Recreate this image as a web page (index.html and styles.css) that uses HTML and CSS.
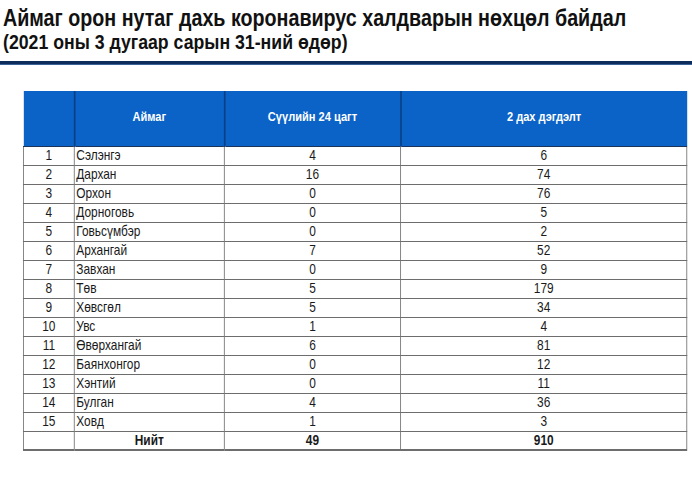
FILE: index.html
```html
<!DOCTYPE html>
<html lang="mn">
<head>
<meta charset="utf-8">
<title>Аймаг орон нутаг дахь коронавирус халдварын нөхцөл байдал</title>
<link rel="stylesheet" href="styles.css">
</head>
<body>
<header class="head">
  <h1 class="title"><span class="narrow-t">Аймаг орон нутаг дахь коронавирус халдварын нөхцөл байдал</span></h1>
  <p class="subtitle"><span class="narrow-s">(2021 оны 3 дугаар сарын 31-ний өдөр)</span></p>
</header>
<div class="rule"></div>
<main class="content">
  <table class="grid">
    <colgroup>
      <col class="c-num"><col class="c-name"><col class="c-day"><col class="c-total">
    </colgroup>
    <thead>
      <tr><th></th><th>Аймаг</th><th>Сүүлийн 24 цагт</th><th>2 дах дэгдэлт</th></tr>
    </thead>
    <tbody>
      <tr><td class="n">1</td><td class="a">Сэлэнгэ</td><td>4</td><td>6</td></tr>
      <tr><td class="n">2</td><td class="a">Дархан</td><td>16</td><td>74</td></tr>
      <tr><td class="n">3</td><td class="a">Орхон</td><td>0</td><td>76</td></tr>
      <tr><td class="n">4</td><td class="a">Дорноговь</td><td>0</td><td>5</td></tr>
      <tr><td class="n">5</td><td class="a">Говьсүмбэр</td><td>0</td><td>2</td></tr>
      <tr><td class="n">6</td><td class="a">Архангай</td><td>7</td><td>52</td></tr>
      <tr><td class="n">7</td><td class="a">Завхан</td><td>0</td><td>9</td></tr>
      <tr><td class="n">8</td><td class="a">Төв</td><td>5</td><td>179</td></tr>
      <tr><td class="n">9</td><td class="a">Хөвсгөл</td><td>5</td><td>34</td></tr>
      <tr><td class="n">10</td><td class="a">Увс</td><td>1</td><td>4</td></tr>
      <tr><td class="n">11</td><td class="a">Өвөрхангай</td><td>6</td><td>81</td></tr>
      <tr><td class="n">12</td><td class="a">Баянхонгор</td><td>0</td><td>12</td></tr>
      <tr><td class="n">13</td><td class="a">Хэнтий</td><td>0</td><td>11</td></tr>
      <tr><td class="n">14</td><td class="a">Булган</td><td>4</td><td>36</td></tr>
      <tr><td class="n">15</td><td class="a">Ховд</td><td>1</td><td>3</td></tr>
      <tr class="sum"><td class="n"></td><td>Нийт</td><td>49</td><td>910</td></tr>
    </tbody>
  </table>
</main>
</body>
</html>
```

FILE: styles.css
```css
html, body {
  margin: 0;
  padding: 0;
  background: #ffffff;
  overflow: hidden;
}

body {
  width: 692px;
  height: 495px;
  font-family: "Liberation Sans", Arial, sans-serif;
  color: #111111;
}

.head {
  padding: 4px 0 0 3px;
  height: 58px;
  box-sizing: border-box;
  overflow: hidden;
}

.title {
  margin: 0;
  font-size: 24px;
  font-weight: bold;
  line-height: 27px;
  white-space: nowrap;
}

.narrow-t {
  display: inline-block;
  transform: scaleX(0.82);
  transform-origin: 0 50%;
}

.subtitle {
  margin: 0;
  font-size: 20px;
  font-weight: bold;
  line-height: 23px;
  white-space: nowrap;
}

.narrow-s {
  display: inline-block;
  transform: scaleX(0.885);
  transform-origin: 0 50%;
}

.rule {
  margin-top: 3px;
  height: 3px;
  background: #0d2b5b;
  border-bottom: 1px solid #3c6398;
}

.content {
  padding: 26px 0 0 23px;
  overflow: hidden;
}

.grid {
  border-collapse: collapse;
  table-layout: fixed;
  width: 809px;
  font-size: 14.5px;
  transform: scaleX(0.82);
  transform-origin: 0 0;
}

.c-num { width: 62px; }
.c-name { width: 183px; }
.c-day { width: 215px; }
.c-total { width: 349px; }

.grid th {
  height: 55px;
  padding: 0 0 3px;
  box-sizing: border-box;
  background: #0b63c8;
  color: #ffffff;
  font-size: 13.5px;
  font-weight: bold;
  text-align: center;
  border-left: 2px solid #0a3f86;
  border-bottom: 1px solid #1b3457;
}

.grid th:first-child {
  border-left: 0;
}

.grid td {
  height: 19px;
  padding: 0 2px;
  box-sizing: border-box;
  border: 1px solid #6d6d6d;
  text-align: center;
  line-height: 17px;
  color: #1a1a1a;
}

.grid td.a {
  text-align: left;
}

.grid .sum td {
  font-weight: bold;
  border-bottom: 2px solid #6d6d6d;
}
```
